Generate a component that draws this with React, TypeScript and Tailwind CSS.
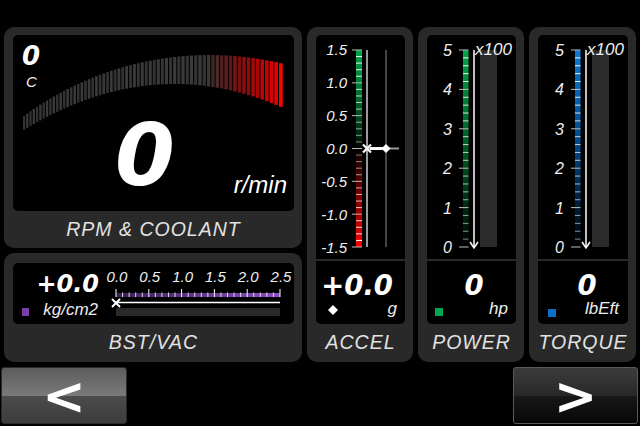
import React from 'react';

const NUM_FONT = '"DejaVu Sans", Verdana, sans-serif';
const TXT_FONT = '"Liberation Sans", Arial, sans-serif';

type PanelProps = {
  label: string;
  className?: string;
  children: React.ReactNode;
};

const Panel: React.FC<PanelProps> = ({ label, className = '', children }) => (
  <div className={`flex flex-col rounded-[10px] bg-[#292929] pl-[9px] pr-[8px] ${className}`}>
    {children}
    <div className="flex flex-1 items-center justify-center text-[19.5px] italic tracking-[1px] text-[#e2e2e2]">
      {label}
    </div>
  </div>
);

// rpm arc bars, local coords of the inner box (origin 13,35)
const rpmBars = (() => {
  const out: { x: number; y: number; w: number; h: number; fill: string }[] = [];
  const n = 66;
  let x = 10;
  for (let i = 0; i < n; i++) {
    const p = 3.2 + (1.5 * i) / (n - 1);
    const gx = x + p / 2 + 13;
    const top = 368 - Math.sqrt(313 * 313 - (gx - 210) * (gx - 210)) - 35;
    const bottom = 84 + 0.00202 * (gx - 175) * (gx - 175) - 35;
    const t = Math.min(1, Math.max(0, (gx - 205) / 79));
    const base = i % 2 === 0 ? 50 : 58;
    const r = Math.round(base + (255 - base) * Math.pow(t, 1.3));
    const g = Math.round(base * Math.pow(1 - t, 2));
    out.push({ x, y: top, w: p - 1, h: bottom - top, fill: `rgb(${r},${g},${g})` });
    x += p;
  }
  return out;
})();

const RpmGauge = () => (
  <svg width={281} height={176}>
    {rpmBars.map((b, i) => (
      <rect key={i} x={b.x} y={b.y} width={b.w} height={b.h} fill={b.fill} />
    ))}
    <text x={9} y={30} fontSize={26} fontFamily={NUM_FONT} fontWeight="bold" fontStyle="italic" fill="#fff">
      0
    </text>
    <text x={13} y={52} fontSize={15} fontFamily={TXT_FONT} fontStyle="italic" fill="#eee">
      C
    </text>
    <text x={132} y={150} textAnchor="middle" fontSize={86} fontFamily={NUM_FONT} fontWeight="bold" fontStyle="italic" fill="#fff">
      0
    </text>
    <text x={274} y={158} textAnchor="end" fontSize={24} fontFamily={TXT_FONT} fontStyle="italic" fill="#fff">
      r/min
    </text>
  </svg>
);

const BstGauge = () => {
  const x0 = 103;
  const x1 = 267;
  const labels = ['0.0', '0.5', '1.0', '1.5', '2.0', '2.5'];
  const ticks = Array.from({ length: 26 }, (_, i) => i);
  return (
    <svg width={281} height={61}>
      <defs>
        <linearGradient id="bstFill" x1="0" y1="0" x2="1" y2="0">
          <stop offset="0%" stopColor="#3a1f55" />
          <stop offset="100%" stopColor="#8a4cc4" />
        </linearGradient>
      </defs>
      <text x={86} y={29} textAnchor="end" fontSize={24} fontFamily={NUM_FONT} fontWeight="bold" fontStyle="italic" fill="#fff">
        +0.0
      </text>
      <rect x={9} y={45} width={7} height={8} fill="#7b3fa9" />
      <text x={85} y={52} textAnchor="end" fontSize={17} fontFamily={TXT_FONT} fontStyle="italic" fill="#eee">
        kg/cm2
      </text>
      {labels.map((l, i) => (
        <text key={l} x={x0 + ((x1 - x0) * i) / 5 + 1} y={19} textAnchor="middle" fontSize={15} fontFamily={TXT_FONT} fontStyle="italic" fill="#eee">
          {l}
        </text>
      ))}
      <rect x={x0} y={30} width={x1 - x0} height={4} fill="url(#bstFill)" />
      {ticks.map((i) => {
        const x = x0 + ((x1 - x0) * i) / 25;
        const major = i % 5 === 0;
        return (
          <line key={i} x1={x} x2={x} y1={major ? 26 : 29.5} y2={34} stroke={major ? '#fff' : '#ddd'} strokeWidth={1} />
        );
      })}
      <line x1={x0} x2={x1} y1={39.5} y2={39.5} stroke="#fff" strokeWidth={1.5} />
      <line x1={x0 - 4} y1={36} x2={x0 + 4} y2={44} stroke="#fff" strokeWidth={2} />
      <line x1={x0 - 4} y1={44} x2={x0 + 4} y2={36} stroke="#fff" strokeWidth={2} />
      <rect x={x0} y={45} width={x1 - x0} height={8} fill="#2a2a2a" />
    </svg>
  );
};

const AccelScale = () => {
  const yOf = (v: number) => 113.5 - v * 65.67;
  const labels = [1.5, 1.0, 0.5, 0, -0.5, -1.0, -1.5];
  const ticks = Array.from({ length: 31 }, (_, i) => i - 15);
  return (
    <svg width={89} height={224}>
      <defs>
        <linearGradient id="accFill" x1="0" y1="0" x2="0" y2="1">
          <stop offset="0%" stopColor="#00a545" />
          <stop offset="25%" stopColor="#006a2c" />
          <stop offset="45%" stopColor="#00200c" />
          <stop offset="50%" stopColor="#000" />
          <stop offset="56%" stopColor="#250000" />
          <stop offset="78%" stopColor="#880000" />
          <stop offset="100%" stopColor="#ff0000" />
        </linearGradient>
      </defs>
      {labels.map((v) => (
        <text key={v} x={31} y={yOf(v) + 5.5} textAnchor="end" fontSize={15} fontFamily={TXT_FONT} fontStyle="italic" fill="#eee">
          {v.toFixed(1)}
        </text>
      ))}
      <rect x={40} y={15} width={6} height={197} fill="url(#accFill)" />
      {ticks.map((k) => {
        const y = yOf(k / 10);
        const major = k % 5 === 0;
        const op = 0.45 + (0.55 * Math.abs(k)) / 15;
        return (
          <line key={k} x1={major ? 36 : 40} x2={46} y1={y} y2={y} stroke={major ? '#bbb' : '#fff'} strokeOpacity={major ? 1 : op} strokeWidth={1} />
        );
      })}
      <line x1={51} x2={51} y1={15} y2={212} stroke="#999" strokeWidth={2} />
      <line x1={70} x2={70} y1={15} y2={212} stroke="#444" strokeWidth={2} />
      <line x1={51} x2={83} y1={113.5} y2={113.5} stroke="#999" strokeWidth={2} />
      <line x1={54} x2={70} y1={113.5} y2={113.5} stroke="#fff" strokeWidth={3} />
      <polygon points="70,109 74.5,113.5 70,118 65.5,113.5" fill="#fff" />
      <line x1={47} y1={109.5} x2={55} y2={117.5} stroke="#fff" strokeWidth={2.2} />
      <line x1={47} y1={117.5} x2={55} y2={109.5} stroke="#fff" strokeWidth={2.2} />
    </svg>
  );
};

type BarGaugeProps = {
  id: string;
  o: number;
  colors: [string, string, string];
};

const BarScale: React.FC<BarGaugeProps> = ({ id, o, colors }) => {
  const yOf = (v: number) => 15 + (5 - v) * 39.4;
  const ticks = Array.from({ length: 26 }, (_, i) => i);
  return (
    <svg width={90} height={224}>
      <defs>
        <linearGradient id={id} x1="0" y1="0" x2="0" y2="1">
          <stop offset="0%" stopColor={colors[0]} />
          <stop offset="45%" stopColor={colors[1]} />
          <stop offset="82%" stopColor={colors[2]} />
          <stop offset="100%" stopColor="#000" />
        </linearGradient>
      </defs>
      {[5, 4, 3, 2, 1, 0].map((v) => (
        <text key={v} x={25 + o} y={yOf(v) + 6} textAnchor="end" fontSize={16} fontFamily={TXT_FONT} fontStyle="italic" fill="#eee">
          {v}
        </text>
      ))}
      <rect x={36 + o} y={15} width={5.5} height={197} fill={`url(#${id})`} />
      {ticks.map((i) => {
        const y = yOf(i / 5);
        const major = i % 5 === 0;
        return (
          <line key={i} x1={major ? 32 + o : 36 + o} x2={41.5 + o} y1={y} y2={y} stroke={major ? '#bbb' : '#fff'} strokeOpacity={major ? 1 : 0.5 + (0.5 * i) / 25} strokeWidth={1} />
        );
      })}
      <rect x={53 + o} y={15} width={17} height={197} fill="#2b2b2b" />
      <line x1={47 + o} x2={47 + o} y1={15} y2={213} stroke="#fff" strokeWidth={1.5} />
      <polyline points={`${43 + o},207 ${47 + o},213 ${51 + o},207`} fill="none" stroke="#fff" strokeWidth={1.5} />
      <text x={48 + o} y={20} fontSize={17} fontFamily={TXT_FONT} fontStyle="italic" fill="#eee">
        x100
      </text>
    </svg>
  );
};

type ReadoutProps = {
  value: string;
  unit: string;
  cx: number;
  mark: React.ReactNode;
};

const Readout: React.FC<ReadoutProps> = ({ value, unit, cx, mark }) => (
  <svg width={89} height={63}>
    <text x={cx} y={34} textAnchor="middle" fontSize={27.5} fontFamily={NUM_FONT} fontWeight="bold" fontStyle="italic" fill="#fff">
      {value}
    </text>
    {mark}
    <text x={81} y={53} textAnchor="end" fontSize={17} fontFamily={TXT_FONT} fontStyle="italic" fill="#eee">
      {unit}
    </text>
  </svg>
);

const TallPanel: React.FC<{ label: string; scale: React.ReactNode; readout: React.ReactNode; className?: string }> = ({
  label,
  scale,
  readout,
  className = '',
}) => (
  <Panel label={label} className={`h-[335px] pt-[8px] ${className}`}>
    <div className="flex h-[289px] flex-col gap-[2px]">
      <div className="h-[224px] overflow-hidden rounded-t-[5px] bg-black">{scale}</div>
      <div className="h-[63px] overflow-hidden rounded-b-[5px] bg-black">{readout}</div>
    </div>
  </Panel>
);

const App: React.FC = () => {
  return (
    <div className="flex h-[426px] w-[640px] flex-col overflow-hidden bg-black font-['Liberation_Sans',Arial,sans-serif]">
      <div className="flex gap-[5px] px-[4px] pt-[27px]">
        <div className="flex w-[298px] flex-col gap-[5px]">
          <Panel label="RPM & COOLANT" className="h-[221px] pt-[8px]">
            <div className="h-[176px] overflow-hidden rounded-[5px] bg-black">
              <RpmGauge />
            </div>
          </Panel>
          <Panel label="BST/VAC" className="h-[109px] pt-[10px]">
            <div className="h-[61px] overflow-hidden rounded-[5px] bg-black">
              <BstGauge />
            </div>
          </Panel>
        </div>

        <TallPanel
          label="ACCEL"
          className="w-[106px]"
          scale={<AccelScale />}
          readout={
            <svg width={89} height={63}>
              <text x={77} y={34} textAnchor="end" fontSize={27.5} fontFamily={NUM_FONT} fontWeight="bold" fontStyle="italic" fill="#fff">
                +0.0
              </text>
              <polygon points="17,44 22,49 17,54 12,49" fill="#fff" />
              <text x={81} y={53} textAnchor="end" fontSize={17} fontFamily={TXT_FONT} fontStyle="italic" fill="#eee">
                g
              </text>
            </svg>
          }
        />
        <TallPanel
          label="POWER"
          className="w-[106px]"
          scale={<BarScale id="pwrFill" o={0} colors={['#00a548', '#006028', '#002810']} />}
          readout={<Readout value="0" unit="hp" cx={47} mark={<rect x={8} y={47} width={8} height={8} fill="#00a651" />} />}
        />
        <TallPanel
          label="TORQUE"
          className="w-[107px]"
          scale={<BarScale id="trqFill" o={1} colors={['#0a7ad4', '#004a8a', '#001a34']} />}
          readout={<Readout value="0" unit="lbEft" cx={49} mark={<rect x={10} y={48} width={8} height={8} fill="#0a70c8" />} />}
        />
      </div>

      <div className="flex justify-between pl-[1px] pr-[2px] pt-[5px]">
        <button className="flex h-[57px] w-[126px] items-center justify-center rounded-[3px] border border-[#2a2a2a] bg-[linear-gradient(to_bottom,#5c5c5c_0%,#7a7a7a_50%,#4c4c4c_50%,#3c3c3c_100%)] font-['DejaVu_Sans',sans-serif] text-[52px] font-bold leading-none text-white">
          &lt;
        </button>
        <button className="flex h-[57px] w-[125px] items-center justify-center rounded-[3px] border border-[#5a5a5a] bg-[linear-gradient(to_bottom,#3c3c3c_0%,#272727_50%,#181818_50%,#070707_100%)] font-['DejaVu_Sans',sans-serif] text-[52px] font-bold leading-none text-white">
          &gt;
        </button>
      </div>
    </div>
  );
};

export default App;
